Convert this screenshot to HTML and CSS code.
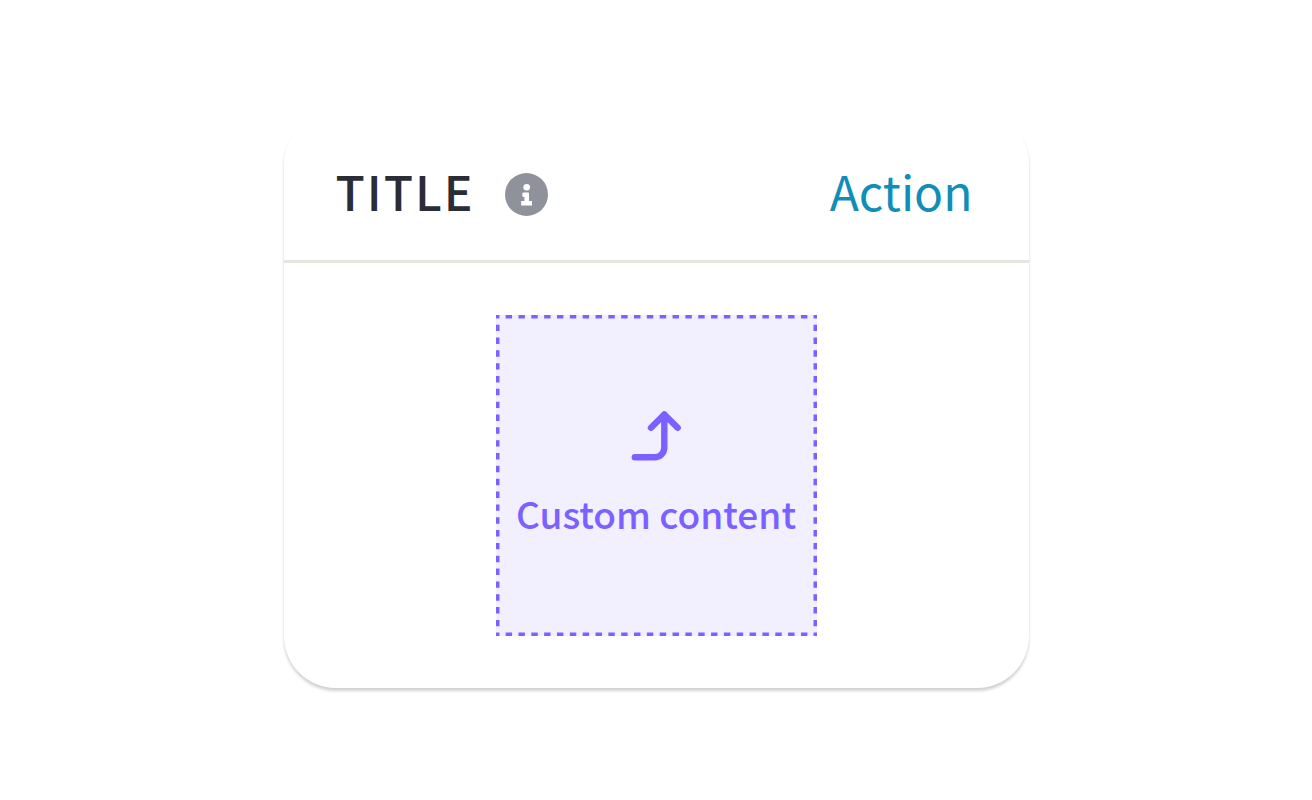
FILE: index.html
```html
<!DOCTYPE html>
<html lang="en">
<head>
    <meta charset="UTF-8">
    <meta name="viewport" content="width=device-width, initial-scale=1.0">
    <title>Card</title>
    <link rel="stylesheet" href="styles.css">
</head>
<body>
    <section class="card">
        <header class="card-header">
            <h1 class="card-title">TITLE</h1>
            <button type="button" class="info-button" aria-label="More information">
                <svg viewBox="0 0 43 43" aria-hidden="true">
                    <circle class="info-disc" cx="21.5" cy="21.5" r="21.5"/>
                    <circle cx="21.7" cy="14.2" r="3.3"/>
                    <path d="M18.400 19.400h4.600q1 0 1 1v7.600h3v4.600H16.200v-4.600h3.200v-4h-1q-1 0-1-1v-2.600q0-1 1-1z"/>
                </svg>
            </button>
            <a href="#" class="card-action">Action</a>
        </header>

        <div class="card-body">
            <div class="slot">
                <svg class="slot-border" viewBox="0 0 321 321" aria-hidden="true">
                    <rect width="321" height="321" pathLength="400"/>
                </svg>
                <svg class="slot-icon" viewBox="0 0 52 52" aria-hidden="true">
                    <path stroke-width="6.4" d="M4.800 48.300H24.500C30 48.300 34.300 44 34.300 38.500V5.500M21 18.800L34.300 5.500L47.700 18.800"/>
                </svg>
                <p class="slot-text">Custom content</p>
            </div>
        </div>
    </section>
</body>
</html>
```

FILE: styles.css
```css
:root {
    --white: #ffffff;
    --title: #2b2d36;
    --muted: #8f929a;
    --link: #118eb8;
    --divider: #e6e6e1;
    --slot: #7b61ff;
    --slot-bg: #f2efff;
}

* {
    margin: 0;
    padding: 0;
    box-sizing: border-box;
}

body {
    min-height: 100vh;
    display: flex;
    align-items: center;
    justify-content: center;
    background: var(--white);
    font-family: 'Noto Sans CJK JP', 'Open Sans', sans-serif;
    padding: 16px;
}

.card {
    width: 100%;
    max-width: 745px;
    background: var(--white);
    border-radius: 52px;
    box-shadow: 0 3px 3px rgba(0, 0, 0, 0.18);
}

.card-header {
    display: flex;
    align-items: center;
    padding: 50px 56px 34px 52px;
    border-bottom: 3px solid var(--divider);
}

.card-title,
.card-action {
    padding-bottom: 8px;
    font-size: 48px;
    line-height: 56px;
}

.card-title {
    font-weight: 500;
    letter-spacing: 2px;
    color: var(--title);
}

.info-button {
    width: 43px;
    height: 43px;
    margin-left: 30px;
    border: none;
    background: none;
    cursor: pointer;
}

.info-button svg {
    display: block;
    fill: var(--white);
}

.info-button .info-disc {
    fill: var(--muted);
}

.card-action {
    margin-left: auto;
    color: var(--link);
    text-decoration: none;
}

.card-body {
    display: flex;
    justify-content: center;
    padding: 52px 16px;
}

.slot {
    position: relative;
    display: flex;
    flex-direction: column;
    align-items: center;
    justify-content: center;
    gap: 24px;
    width: 321px;
    aspect-ratio: 1;
    padding-bottom: 2px;
    background: var(--slot-bg);
    color: var(--slot);
}

/* the outer half of the stroke is cut off by the svg edge */
.slot-border {
    position: absolute;
    inset: 0;
    overflow: hidden;
    fill: none;
    stroke: currentColor;
    stroke-width: 7px;
    stroke-dasharray: 2;
    stroke-dashoffset: 1;
}

.slot-icon {
    width: 52px;
    height: 52px;
    fill: none;
    stroke: currentColor;
    stroke-linecap: round;
    stroke-linejoin: round;
}

.slot-text {
    font-size: 37px;
    font-weight: 500;
    line-height: 56px;
    white-space: nowrap;
}
```
